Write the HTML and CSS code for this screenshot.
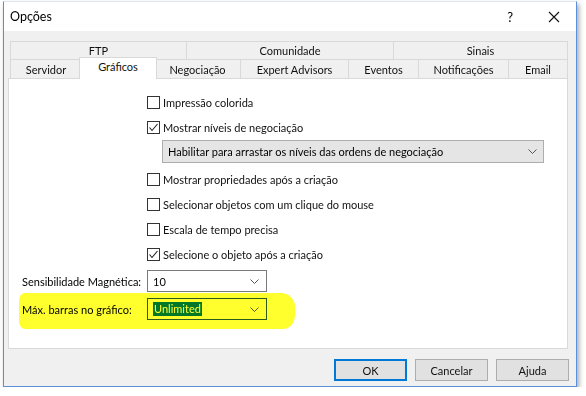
FILE: index.html
```html
<!DOCTYPE html>
<html lang="pt">
<head>
    <meta charset="UTF-8">
    <title>Opções</title>
    <link rel="stylesheet" href="styles.css">
</head>
<body>
    <div class="window">
        <div class="titlebar">
            <span class="title">Opções</span>
            <span class="title-help">?</span>
            <svg class="title-close" width="12" height="12" viewBox="0 0 12 12">
                <path d="M1 1 L11 11 M11 1 L1 11" stroke="#111" stroke-width="1.1" fill="none"/>
            </svg>
        </div>

        <div class="content">
            <div class="tabs">
                <div class="tab-row tab-row--top">
                    <div class="tab">FTP</div>
                    <div class="tab">Comunidade</div>
                    <div class="tab">Sinais</div>
                </div>
                <div class="tab-row tab-row--bottom">
                    <div class="tab">Servidor</div>
                    <div class="tab tab--active">Gráficos</div>
                    <div class="tab">Negociação</div>
                    <div class="tab">Expert Advisors</div>
                    <div class="tab">Eventos</div>
                    <div class="tab">Notificações</div>
                    <div class="tab">Email</div>
                </div>
            </div>

            <div class="panel">
                <div class="options">
                    <label class="check-row"><span class="checkbox"></span>Impressão colorida</label>
                    <label class="check-row">
                        <span class="checkbox">
                            <svg width="11" height="11" viewBox="0 0 11 11"><polyline points="1.5,5.5 4,8.5 9.5,2" stroke="#222" stroke-width="1.1" fill="none"/></svg>
                        </span>Mostrar níveis de negociação
                    </label>
                    <div class="dropdown">
                        <span>Habilitar para arrastar os níveis das ordens de negociação</span>
                        <svg class="chevron" width="9" height="5" viewBox="0 0 9 5"><polyline points="0.5,0.5 4.5,4.5 8.5,0.5" stroke="#555" fill="none"/></svg>
                    </div>
                    <label class="check-row"><span class="checkbox"></span>Mostrar propriedades após a criação</label>
                    <label class="check-row"><span class="checkbox"></span>Selecionar objetos com um clique do mouse</label>
                    <label class="check-row"><span class="checkbox"></span>Escala de tempo precisa</label>
                    <label class="check-row">
                        <span class="checkbox">
                            <svg width="11" height="11" viewBox="0 0 11 11"><polyline points="1.5,5.5 4,8.5 9.5,2" stroke="#222" stroke-width="1.1" fill="none"/></svg>
                        </span>Selecione o objeto após a criação
                    </label>
                </div>

                <div class="fields">
                    <div class="field-row">
                        <span class="field-label">Sensibilidade Magnética:</span>
                        <div class="select">
                            <span>10</span>
                            <svg class="chevron" width="9" height="5" viewBox="0 0 9 5"><polyline points="0.5,0.5 4.5,4.5 8.5,0.5" stroke="#555" fill="none"/></svg>
                        </div>
                    </div>
                    <div class="field-row">
                        <span class="field-label">Máx. barras no gráfico:</span>
                        <div class="select select--focus">
                            <span class="selected-text">Unlimited</span>
                            <svg class="chevron" width="9" height="5" viewBox="0 0 9 5"><polyline points="0.5,0.5 4.5,4.5 8.5,0.5" stroke="#555" fill="none"/></svg>
                        </div>
                    </div>
                </div>

                <div class="highlight"></div>
            </div>

            <div class="buttons">
                <button class="btn btn--default">OK</button>
                <button class="btn">Cancelar</button>
                <button class="btn">Ajuda</button>
            </div>
        </div>
    </div>
</body>
</html>
```

FILE: styles.css
```css
body {
    margin: 0;
    background-color: #fff;
    font-family: Lato, "Noto Sans", sans-serif;
    font-size: 11px;
    color: #000;
}

.window {
    box-sizing: border-box;
    width: 574px;
    height: 386px;
    margin: 1px 0 0 3px;
    background-color: #f0f0f0;
    border: 1px solid #5a8fd9;
    border-top-color: #dfe6ef;
    box-shadow: 2px 3px 5px rgba(0, 0, 0, 0.35);
}

/* Title bar */
.titlebar {
    display: flex;
    align-items: center;
    height: 29px;
    padding: 0 16px 0 6px;
    background-color: #fff;
}

.title {
    font-size: 12.5px;
}

.title-help {
    margin-left: auto;
    font-size: 13px;
}

.title-close {
    margin-left: 35px;
}

/* Tabs */
.content {
    padding: 10px 0 0 4px;
}

.tabs {
    margin-left: 2px;
    width: 557px;
}

.tab-row {
    display: grid;
    border-left: 1px solid #d9d9d9;
}

.tab-row--top {
    grid-template-columns: 176px 207px 174px;
    height: 18px;
}

.tab-row--bottom {
    grid-template-columns: 71px 73px 86px 108px 70px 90px 59px;
    height: 19px;
}

.tab {
    display: flex;
    align-items: center;
    justify-content: center;
    border-top: 1px solid #d9d9d9;
    border-right: 1px solid #d9d9d9;
    color: #111;
}

.tab--active {
    position: relative;
    z-index: 1;
    margin: -2px -2px -1px -3px;
    padding-bottom: 4px;
    background-color: #fff;
    border-left: 1px solid #d9d9d9;
}

/* Panel */
.panel {
    position: relative;
    box-sizing: border-box;
    width: 560px;
    height: 271px;
    background-color: #fff;
    border: 1px solid #d9d9d9;
}

.options {
    display: flex;
    flex-direction: column;
    padding: 11px 0 0 138px;
}

.check-row {
    display: flex;
    align-items: center;
    gap: 3px;
    height: 25px;
    color: #111;
}

.checkbox {
    box-sizing: border-box;
    display: flex;
    align-items: center;
    justify-content: center;
    width: 13px;
    height: 13px;
    border: 1px solid #333;
    background-color: #fff;
}

.dropdown {
    box-sizing: border-box;
    display: flex;
    align-items: center;
    width: 382px;
    height: 23px;
    margin: 0 0 4px 15px;
    padding: 0 6px 0 5px;
    background-color: #e5e5e5;
    border: 1px solid #adadad;
}

.chevron {
    margin-left: auto;
}

/* Fields */
.fields {
    display: flex;
    flex-direction: column;
    gap: 6px;
    padding: 3px 0 0 13px;
}

.field-row {
    display: flex;
    align-items: center;
}

.field-label {
    width: 125px;
    white-space: nowrap;
}

.select {
    box-sizing: border-box;
    display: flex;
    align-items: center;
    width: 120px;
    height: 22px;
    padding: 0 7px 0 5px;
    background-color: #fff;
    border: 1px solid #7a7a7a;
}

.select--focus {
    border-color: #2a5b8a;
}

.selected-text {
    background-color: #0078d7;
    color: #fff;
    padding: 0 1px;
    line-height: 14px;
}

.highlight {
    position: absolute;
    left: 10px;
    top: 214px;
    width: 276px;
    height: 36px;
    background-color: #ffff2e;
    mix-blend-mode: multiply;
    border-radius: 6px 14px 12px 6px / 8px 14px 14px 8px;
}

/* Buttons */
.buttons {
    display: flex;
    justify-content: flex-end;
    gap: 8px;
    width: 561px;
    padding-top: 10px;
}

.btn {
    box-sizing: border-box;
    width: 73px;
    height: 22px;
    padding: 0;
    font-family: inherit;
    font-size: 11px;
    color: #111;
    background-color: #e1e1e1;
    border: 1px solid #adadad;
}

.btn--default {
    border: 2px solid #0078d7;
}
```
